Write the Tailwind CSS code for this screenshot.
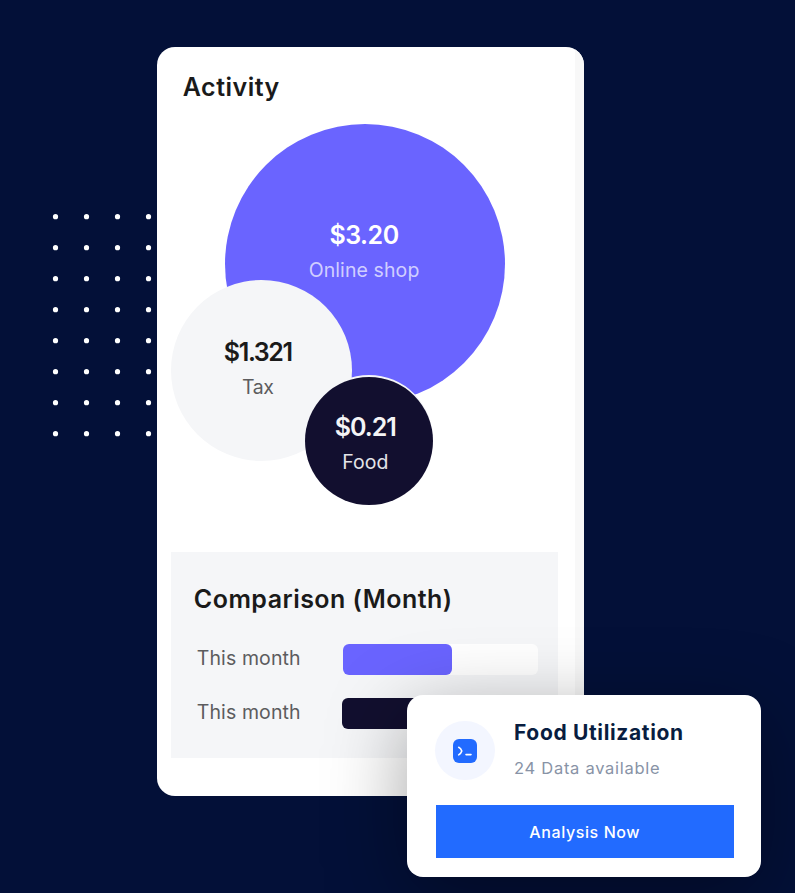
<!DOCTYPE html>
<html lang="en">
<head>
<meta charset="utf-8">
<title>Activity</title>
<script src="https://cdn.jsdelivr.net/npm/@tailwindcss/browser@4"></script>
</head>
<body class="relative h-[893px] w-[795px] overflow-hidden bg-[#031038] font-['Inter',sans-serif]">
  <!-- dot pattern -->
  <svg class="absolute left-[40px] top-[201px]" width="124" height="248" aria-hidden="true">
    <defs><pattern id="dots" width="31" height="31" patternUnits="userSpaceOnUse"><circle cx="15.5" cy="15.7" r="2.6" fill="#fff"/></pattern></defs>
    <rect width="124" height="248" fill="url(#dots)"/>
  </svg>

  <main class="relative ml-[157.3px] mt-[46.5px] flex h-[749.5px] w-[426.5px] flex-col overflow-hidden rounded-[18px] bg-white">
    <div class="absolute inset-y-0 right-0 w-[9px] bg-[#f8f8f8]"></div>
    <h1 class="ml-[25.5px] mt-[24px] whitespace-nowrap text-[25px] leading-[32px] font-semibold tracking-[0.5px] text-[#1a1a1a]">Activity</h1>

    <!-- spending bubbles -->
    <section class="absolute left-0 top-0 whitespace-nowrap">
      <div class="absolute left-[67.5px] top-[77px] flex size-[280.5px] flex-col items-center rounded-full bg-[#6a64ff] pt-[95px] pr-[2px] text-white">
        <b class="text-[25px] leading-[32px] font-semibold tracking-[-0.5px]">$3.20</b>
        <span class="mt-[3px] text-[19.5px] leading-[32px] tracking-[0.1px] text-white/70">Online shop</span>
      </div>
      <div class="absolute left-[14px] top-[233.5px] flex size-[181px] flex-col items-center rounded-full bg-[#f5f6f8] pt-[56px] pr-[8px] text-[#1a1a1a]">
        <b class="text-[25px] leading-[32px] font-semibold tracking-[-1.4px]">$1.321</b>
        <span class="mt-[3px] text-[19.5px] leading-[32px] tracking-[-0.4px] text-[#5c5c5e]">Tax</span>
      </div>
      <div class="absolute left-[147.5px] top-[330.5px] flex size-[128px] flex-col items-center rounded-full bg-[#120f2f] pt-[34px] pr-[7px] text-[#f4f4f6] shadow-[0_-2px_0_#f5f6f8]">
        <b class="text-[25px] leading-[32px] font-semibold tracking-[-1px]">$0.21</b>
        <span class="mt-[3px] text-[19.5px] leading-[32px] text-[#e4e4e8]">Food</span>
      </div>
    </section>

    <section class="ml-[13.5px] mt-[449.5px] h-[205.5px] w-[387.5px] shrink-0 bg-[#f5f6f8] pt-[30.5px] pl-[23px]">
      <h2 class="whitespace-nowrap text-[25px] leading-[32px] font-semibold tracking-[0.47px] text-[#1a1a1a]">Comparison (Month)</h2>
      <div class="mt-[29.5px] flex h-[31px] items-center">
        <span class="ml-[3px] w-[146px] -translate-y-px whitespace-nowrap text-[19.5px] tracking-[0.1px] text-[#5c5c5e]">This month</span>
        <div class="h-[31px] w-[195px] rounded-[6px] bg-white"><div class="h-full w-[109.5px] rounded-[6px] bg-[#6a64ff]"></div></div>
      </div>
      <div class="mt-[23px] flex h-[31px] items-center">
        <span class="ml-[3px] w-[145px] -translate-y-px whitespace-nowrap text-[19.5px] tracking-[0.1px] text-[#5c5c5e]">This month</span>
        <div class="h-[31px] w-[196px] rounded-[6px] bg-white"><div class="h-full w-[150px] rounded-[6px] bg-[#120f2f]"></div></div>
      </div>
    </section>
  </main>

  <aside class="absolute left-[406.5px] top-[694.8px] flex h-[182px] w-[354px] flex-col rounded-[16px] bg-white shadow-[0_20px_80px_rgba(0,0,0,0.36)]">
    <div class="ml-[28.5px] mt-[26px] flex h-[60px]">
      <div class="flex size-[59.5px] items-center justify-center rounded-full bg-[#f3f6ff]">
        <svg width="24" height="24" viewBox="0 0 24 24" fill="none" stroke="#fff" stroke-width="1.6" stroke-linecap="round" stroke-linejoin="round"><rect width="24" height="24" rx="6" fill="#226bff" stroke="none"/><path d="M5.7 8.3Q8 9.5 8.8 12 8 14.5 5.7 15.9M13 15.6h5"/></svg>
      </div>
      <div class="ml-[19.5px] whitespace-nowrap">
        <h3 class="-mt-[4px] text-[21px] leading-[32px] font-bold tracking-[0.65px] text-[#081d40]">Food Utilization</h3>
        <p class="mt-[6px] text-[16.5px] leading-[26px] tracking-[0.72px] text-[#8893a6]">24 Data available</p>
      </div>
    </div>
    <button class="ml-[29.5px] mt-[24.5px] h-[52.5px] w-[297.5px] whitespace-nowrap bg-[#226bff] text-[16px] font-medium tracking-[0.6px] text-white">Analysis Now</button>
  </aside>
</body>
</html>
